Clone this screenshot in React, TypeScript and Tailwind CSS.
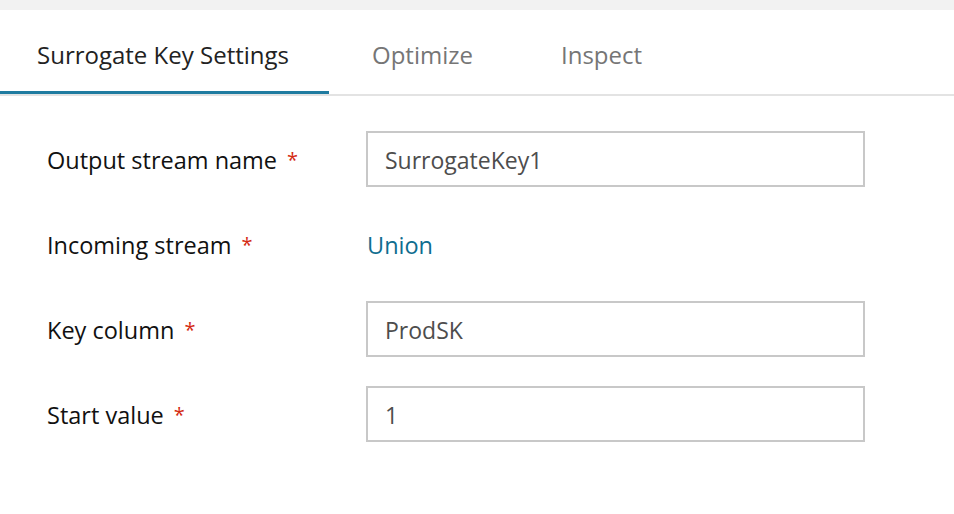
import React from "react";

const font = { fontFamily: '"Open Sans", "Noto Sans", "Liberation Sans", sans-serif' };

function Row({ label, children }: { label: string; children: React.ReactNode }) {
  return (
    <div className="flex h-[56px] items-center">
      <div className="w-[366px] shrink-0 pl-[47px] pt-[4px] text-[23.5px] text-[#111]">
        {label}
        <span className="relative top-[-2px] ml-[10px] text-[20px] text-[#d42a12]">*</span>
      </div>
      {children}
    </div>
  );
}

function Input({ value }: { value: string }) {
  return (
    <div className="flex h-[56px] w-[499px] items-center border-2 border-[#c8c8c8] pl-[17px] pt-[3px] text-[23px] text-[#4d4d4d]">
      {value}
    </div>
  );
}

export default function App() {
  return (
    <div className="h-[514px] w-[954px] overflow-hidden bg-white" style={font}>
      <div className="h-[10px] bg-[#f2f2f2]" />
      <div className="flex h-[86px] border-b-2 border-[#e3e3e3]">
        <div className="relative flex w-[329px] shrink-0 items-center pl-[37px] pt-[6px] text-[24px] text-[#222]">
          Surrogate Key Settings
          <div className="absolute bottom-0 left-0 h-[3px] w-full bg-[#1f7ba0]" />
        </div>
        <div className="flex items-center pl-[43px] pt-[6px] text-[24px] text-[#767676]">Optimize</div>
        <div className="flex items-center pl-[88px] pt-[6px] text-[24px] text-[#767676]">Inspect</div>
      </div>
      <div className="flex flex-col gap-[29px] pt-[35px]">
        <Row label="Output stream name">
          <Input value="SurrogateKey1" />
        </Row>
        <Row label="Incoming stream">
          <div className="pl-[1px] pt-[4px] text-[23.5px] text-[#0f6d8f]">Union</div>
        </Row>
        <Row label="Key column">
          <Input value="ProdSK" />
        </Row>
        <Row label="Start value">
          <Input value="1" />
        </Row>
      </div>
    </div>
  );
}
